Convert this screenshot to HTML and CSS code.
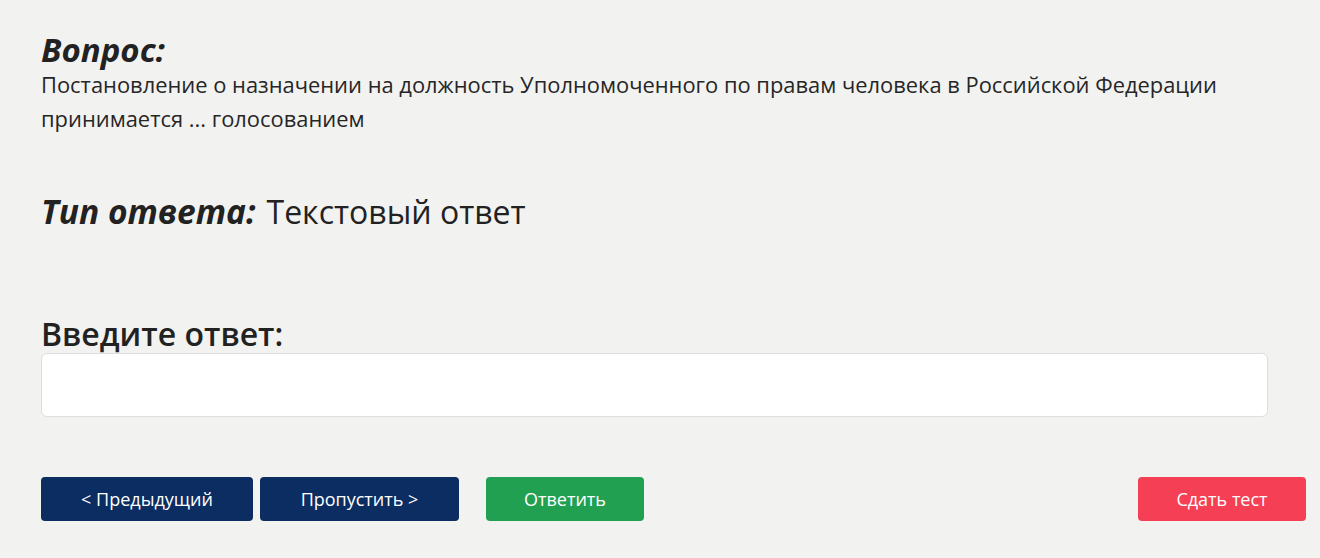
FILE: index.html
```html
<!DOCTYPE html>
<html lang="ru">
<head>
<meta charset="utf-8">
<link rel="stylesheet" href="styles.css">
</head>
<body>
<div class="page">
  <section class="question">
    <h2 class="label">Вопрос:</h2>
    <p class="qtext">Постановление о назначении на должность Уполномоченного по правам человека в Российской Федерации принимается ... голосованием</p>
  </section>
  <section class="type">
    <span class="label">Тип ответа:</span><span class="type-value">Текстовый ответ</span>
  </section>
  <section class="answer">
    <h3 class="answer-title">Введите ответ:</h3>
    <input class="answer-input" type="text">
  </section>
  <div class="actions">
    <div class="nav">
      <button class="btn btn-navy btn-prev">&lt; Предыдущий</button>
      <button class="btn btn-navy btn-skip">Пропустить &gt;</button>
      <button class="btn btn-green btn-answer">Ответить</button>
    </div>
    <button class="btn btn-red btn-finish">Сдать тест</button>
  </div>
</div>
</body>
</html>
```
FILE: styles.css
```css
html, body {
  margin: 0;
  padding: 0;
  background: #f2f2f1;
  font-family: "Open Sans", "Noto Sans", sans-serif;
  color: #222;
}
.page {
  padding: 31px 14px 0 41px;
}
.question, .type, .answer {
  padding-right: 38px;
}
.label {
  font-style: italic;
  font-weight: 700;
  font-size: 33px;
  margin: 0;
  line-height: 37px;
  color: #222;
}
.qtext {
  margin: 0;
  font-size: 21.9px;
  line-height: 34px;
  color: #262626;
}
.type {
  margin-top: 50px;
  display: flex;
  align-items: baseline;
  line-height: 50px;
}
.type .label {
  font-size: 33.5px;
  margin-right: 11px;
  line-height: 50px;
}
.type-value {
  font-size: 32px;
  color: #222;
}
.answer {
  margin-top: 78px;
}
.answer-title {
  margin: 0;
  font-size: 32px;
  font-weight: 600;
  line-height: 38px;
  color: #222;
}
.answer-input {
  display: block;
  box-sizing: border-box;
  width: 100%;
  height: 64px;
  margin-top: 0;
  background: #fff;
  border: 1px solid #dedede;
  border-radius: 6px;
}
.actions {
  margin-top: 60px;
  display: flex;
  justify-content: space-between;
  align-items: center;
}
.nav {
  display: flex;
  gap: 7px;
}
.btn {
  height: 44px;
  border: none;
  border-radius: 4px;
  color: #fff;
  font-family: "Open Sans", "Noto Sans", sans-serif;
  font-size: 18px;
  padding: 0;
}
.btn-navy { background: #0c2d62; }
.btn-green { background: #22a052; }
.btn-red { background: #f43f54; }
.btn-prev { width: 212px; }
.btn-skip { width: 199px; }
.btn-answer { width: 158px; margin-left: 20px; }
.btn-finish { width: 168px; }
```
